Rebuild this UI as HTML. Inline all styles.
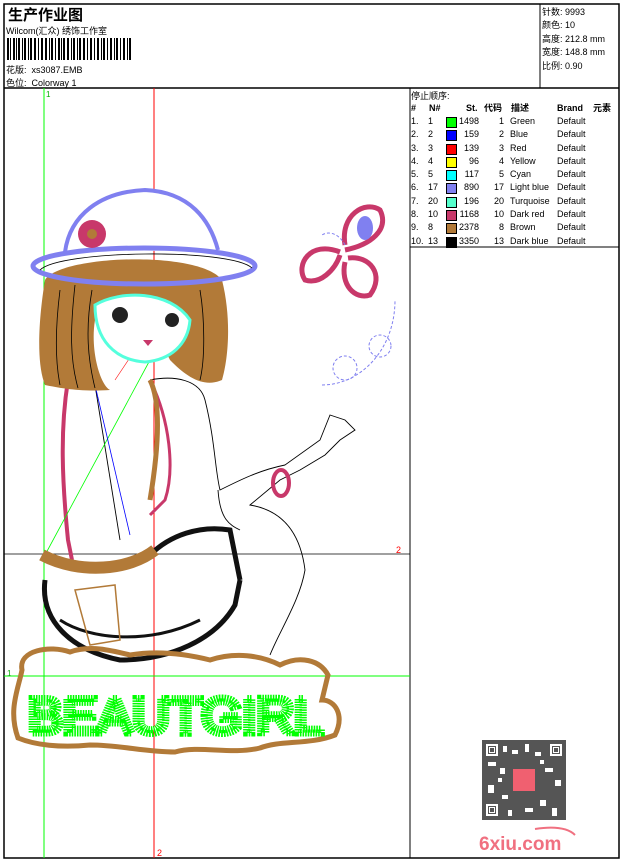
<!DOCTYPE html>
<html><head><meta charset="utf-8"><style>
body{margin:0;background:#fff;width:620px;height:860px;overflow:hidden;font-family:"Liberation Sans","Noto Sans CJK SC",sans-serif;}
.t{position:absolute;font-size:9px;color:#000;white-space:nowrap;}
span{white-space:nowrap;}
</style></head><body>
<svg width="620" height="860" style="position:absolute;left:0;top:0" xmlns="http://www.w3.org/2000/svg">
<rect x="4" y="4" width="615" height="854" fill="none" stroke="#000" stroke-width="1.5"/>
<line x1="4" y1="88" x2="619" y2="88" stroke="#000" stroke-width="1.5"/>
<line x1="540" y1="4" x2="540" y2="88" stroke="#000"/>
<line x1="410" y1="88" x2="410" y2="858" stroke="#000"/>
<line x1="410" y1="247" x2="619" y2="247" stroke="#000"/>
<g fill="#000">
<rect x="7" y="38" width="2" height="22"/><rect x="10" y="38" width="1" height="22"/><rect x="13" y="38" width="2" height="22"/><rect x="16" y="38" width="1" height="22"/><rect x="18" y="38" width="2" height="22"/><rect x="22" y="38" width="1" height="22"/><rect x="24" y="38" width="2" height="22"/><rect x="28" y="38" width="1" height="22"/><rect x="30" y="38" width="2" height="22"/><rect x="34" y="38" width="2" height="22"/><rect x="38" y="38" width="1" height="22"/><rect x="41" y="38" width="2" height="22"/><rect x="45" y="38" width="2" height="22"/><rect x="49" y="38" width="1" height="22"/><rect x="51" y="38" width="2" height="22"/><rect x="55" y="38" width="1" height="22"/><rect x="58" y="38" width="2" height="22"/><rect x="61" y="38" width="1" height="22"/><rect x="63" y="38" width="2" height="22"/><rect x="67" y="38" width="2" height="22"/><rect x="71" y="38" width="1" height="22"/><rect x="73" y="38" width="2" height="22"/><rect x="77" y="38" width="1" height="22"/><rect x="79" y="38" width="2" height="22"/><rect x="83" y="38" width="2" height="22"/><rect x="87" y="38" width="1" height="22"/><rect x="90" y="38" width="2" height="22"/><rect x="94" y="38" width="1" height="22"/><rect x="97" y="38" width="2" height="22"/><rect x="101" y="38" width="1" height="22"/><rect x="103" y="38" width="2" height="22"/><rect x="107" y="38" width="1" height="22"/><rect x="110" y="38" width="2" height="22"/><rect x="114" y="38" width="1" height="22"/><rect x="116" y="38" width="2" height="22"/><rect x="120" y="38" width="1" height="22"/><rect x="123" y="38" width="2" height="22"/><rect x="127" y="38" width="1" height="22"/><rect x="129" y="38" width="2" height="22"/>
</g>
<line x1="44" y1="88" x2="44" y2="858" stroke="#0f0"/>
<line x1="154" y1="88" x2="154" y2="858" stroke="#f00"/>
<line x1="4" y1="676" x2="410" y2="676" stroke="#0f0"/>
<line x1="4" y1="554" x2="410" y2="554" stroke="#000" stroke-width="0.8"/>
<text x="46" y="97" font-size="8" fill="#0a0" font-family="Liberation Sans">1</text>
<text x="7" y="676" font-size="8" fill="#0a0" font-family="Liberation Sans">1</text>
<text x="396" y="553" font-size="9" fill="#f00" font-family="Liberation Sans">2</text>
<text x="157" y="856" font-size="9" fill="#f00" font-family="Liberation Sans">2</text>
<g fill="none" stroke="#000" stroke-width="0.9">
<path d="M150 380 C175 375 200 380 205 400 C215 440 215 470 220 490 C240 480 260 470 285 465 L320 440 L330 415 L345 420 L355 430 L340 440 L325 455 L300 470 L280 480 L250 505 C280 510 300 530 305 570 C300 600 280 630 270 655"/>
<path d="M218 490 C220 520 230 525 240 530"/>
<path d="M95 385 L120 540"/>
</g>
<path d="M68 380 C60 430 62 480 68 540 L72 560" fill="none" stroke="#c8386a" stroke-width="4"/>
<path d="M150 380 C170 420 175 470 165 500 L150 515" fill="none" stroke="#c8386a" stroke-width="3"/>
<path d="M150 380 C160 400 160 440 150 500" fill="none" stroke="#b27a38" stroke-width="5"/>
<ellipse cx="281" cy="483" rx="8" ry="13" fill="none" stroke="#c8386a" stroke-width="4"/>
<line x1="45" y1="555" x2="150" y2="360" stroke="#0f0" stroke-width="0.8"/>
<line x1="95" y1="385" x2="130" y2="535" stroke="#00f" stroke-width="0.8"/>
<line x1="115" y1="380" x2="175" y2="290" stroke="#f00" stroke-width="0.6"/>
<g fill="none" stroke="#111" stroke-width="5">
<path d="M45 580 C40 620 70 650 120 660 C170 660 215 640 235 605 L240 580"/>
<path d="M150 555 C170 535 200 525 230 530 L240 580"/>
<path d="M60 620 C90 640 150 645 200 620" stroke-width="3"/>
</g>
<path d="M42 555 C80 575 130 570 155 550" fill="none" stroke="#b27a38" stroke-width="12"/>
<path d="M75 590 L115 585 L120 640 L90 645 Z" fill="none" stroke="#b27a38" stroke-width="1.5"/>
<path d="M45 280 C60 255 200 250 222 280 C232 320 228 360 222 380 C200 390 180 370 170 360 L155 330 C140 300 110 300 95 320 C90 350 100 385 110 390 C80 392 60 388 45 385 C35 360 40 310 45 280 Z" fill="#b27a38"/>
<g stroke="#000" fill="none" stroke-width="0.8"><path d="M60 290 C55 330 55 360 60 385"/><path d="M75 285 C70 330 70 360 78 388"/><path d="M92 290 C85 330 88 360 95 388"/><path d="M200 290 C205 320 205 360 200 380"/></g>
<path d="M95 305 C120 290 170 290 190 320 C188 345 170 360 145 362 C115 360 95 340 95 305 Z" fill="#fff" stroke="#5fd" stroke-width="3"/>
<circle cx="120" cy="315" r="8" fill="#222"/><circle cx="172" cy="320" r="7" fill="#222"/>
<path d="M143 340 L153 340 L148 346 Z" fill="#c8386a"/>
<path d="M65 252 C70 215 100 192 145 190 C190 192 210 220 218 250" fill="#fff" stroke="#8080f0" stroke-width="4"/>
<ellipse cx="144" cy="266" rx="111" ry="18" fill="none" stroke="#8080f0" stroke-width="5"/>
<path d="M40 270 C60 250 230 248 252 268" fill="none" stroke="#000" stroke-width="0.8"/>
<circle cx="92" cy="234" r="14" fill="#c8386a"/><circle cx="92" cy="234" r="5" fill="#b27a38"/>
<g fill="none" stroke="#c8386a" stroke-width="5">
<path d="M345 245 C340 215 365 200 380 210 C390 230 370 245 345 250"/>
<path d="M340 252 C310 240 295 265 305 280 C320 285 335 270 340 255"/>
<path d="M348 258 C370 255 385 275 370 295 C355 300 340 285 345 262"/>
</g>
<ellipse cx="365" cy="228" rx="8" ry="12" fill="#8080f0"/>
<g fill="none" stroke="#8080f0" stroke-width="1" stroke-dasharray="3 2">
<circle cx="345" cy="368" r="12"/><circle cx="380" cy="346" r="11"/><path d="M322 385 C360 385 395 350 395 300"/><path d="M345 245 C340 235 330 230 322 235"/>
</g>
<path d="M22 670 C18 650 50 645 70 652 C90 645 110 650 130 655 C160 650 190 655 210 660 C235 652 260 655 280 665 C300 655 320 660 328 675 L322 700 C335 700 345 715 335 735 C310 745 280 740 260 748 C230 755 200 745 175 752 C145 752 120 745 90 745 C60 748 35 745 18 738 C8 710 18 690 22 670 Z" fill="none" stroke="#b27a38" stroke-width="5"/>
<text x="28" y="733" font-family="Liberation Sans" font-size="50" fill="none" stroke="#0f0" stroke-width="7" stroke-dasharray="1.5 1" textLength="295" lengthAdjust="spacingAndGlyphs">BEAUTGIRL</text>
<rect x="482" y="740" width="84" height="80" fill="#555"/>
<g fill="#fff">
<rect x="486" y="744" width="12" height="12"/><rect x="550" y="744" width="12" height="12"/><rect x="486" y="804" width="12" height="12"/>
<rect x="503" y="746" width="4" height="6"/><rect x="512" y="750" width="6" height="4"/><rect x="525" y="744" width="4" height="8"/><rect x="535" y="752" width="6" height="4"/><rect x="488" y="762" width="8" height="4"/><rect x="500" y="768" width="5" height="6"/><rect x="545" y="768" width="8" height="4"/><rect x="555" y="780" width="6" height="6"/><rect x="488" y="785" width="6" height="8"/><rect x="502" y="795" width="6" height="4"/><rect x="540" y="800" width="6" height="6"/><rect x="525" y="808" width="8" height="4"/><rect x="552" y="808" width="5" height="8"/><rect x="508" y="810" width="4" height="6"/><rect x="498" y="778" width="4" height="4"/><rect x="540" y="760" width="4" height="4"/>
</g>
<g fill="#555"><rect x="488" y="746" width="8" height="8"/><rect x="552" y="746" width="8" height="8"/><rect x="488" y="806" width="8" height="8"/></g>
<g fill="#fff"><rect x="489" y="747" width="6" height="6"/><rect x="553" y="747" width="6" height="6"/><rect x="489" y="807" width="6" height="6"/></g>
<g fill="#555"><rect x="490" y="748" width="4" height="4"/><rect x="554" y="748" width="4" height="4"/><rect x="490" y="808" width="4" height="4"/></g>
<rect x="513" y="769" width="22" height="22" fill="#f06070"/>
<path d="M535 829 C555 826 568 828 575 835" fill="none" stroke="#f07080" stroke-width="2"/>
<text x="479" y="850" font-family="Liberation Sans" font-weight="bold" font-size="19" fill="#f07080">6xiu.com</text>
</svg>
<div class="t" style="left:8px;top:4px;font-size:15px;font-weight:bold;">生产作业图</div>
<div class="t" style="left:6px;top:24px;">Wilcom(汇众) 绣饰工作室</div>
<div class="t" style="left:6px;top:63px;">花版:&nbsp; xs3087.EMB</div>
<div class="t" style="left:6px;top:76px;">色位:&nbsp; Colorway 1</div>
<div class="t" style="left:542px;top:6px;line-height:13.4px;">针数: 9993<br>颜色: 10<br>高度: 212.8 mm<br>宽度: 148.8 mm<br>比例: 0.90</div>
<div class="t" style="left:411px;top:89px;">停止顺序:</div>
<div style="position:absolute;left:411px;top:102px;width:210px;font-size:9px;line-height:13px;">
<div style="position:relative;height:13px;font-weight:bold;text-decoration:underline;"><span style="position:absolute;left:0">#</span><span style="position:absolute;left:18px">N#</span><span style="position:absolute;left:55px">St.</span><span style="position:absolute;left:73px">代码</span><span style="position:absolute;left:100px">描述</span><span style="position:absolute;left:146px">Brand</span><span style="position:absolute;left:182px">元素</span></div>
</div>
<div style="position:absolute;left:411px;top:115px;width:210px;font-size:9px;line-height:13.3px;white-space:nowrap">
<div style="position:relative;height:13.3px"><span style="position:absolute;left:0">1.</span><span style="position:absolute;left:17px">1</span><span style="position:absolute;left:35px;top:2px;width:9px;height:9px;background:#0f0;border:1px solid #000"></span><span style="position:absolute;left:46px;width:22px;text-align:right">1498</span><span style="position:absolute;left:80px;width:13px;text-align:right">1</span><span style="position:absolute;left:99px">Green</span><span style="position:absolute;left:146px">Default</span></div>
<div style="position:relative;height:13.3px"><span style="position:absolute;left:0">2.</span><span style="position:absolute;left:17px">2</span><span style="position:absolute;left:35px;top:2px;width:9px;height:9px;background:#00f;border:1px solid #000"></span><span style="position:absolute;left:46px;width:22px;text-align:right">159</span><span style="position:absolute;left:80px;width:13px;text-align:right">2</span><span style="position:absolute;left:99px">Blue</span><span style="position:absolute;left:146px">Default</span></div>
<div style="position:relative;height:13.3px"><span style="position:absolute;left:0">3.</span><span style="position:absolute;left:17px">3</span><span style="position:absolute;left:35px;top:2px;width:9px;height:9px;background:#f00;border:1px solid #000"></span><span style="position:absolute;left:46px;width:22px;text-align:right">139</span><span style="position:absolute;left:80px;width:13px;text-align:right">3</span><span style="position:absolute;left:99px">Red</span><span style="position:absolute;left:146px">Default</span></div>
<div style="position:relative;height:13.3px"><span style="position:absolute;left:0">4.</span><span style="position:absolute;left:17px">4</span><span style="position:absolute;left:35px;top:2px;width:9px;height:9px;background:#ff0;border:1px solid #000"></span><span style="position:absolute;left:46px;width:22px;text-align:right">96</span><span style="position:absolute;left:80px;width:13px;text-align:right">4</span><span style="position:absolute;left:99px">Yellow</span><span style="position:absolute;left:146px">Default</span></div>
<div style="position:relative;height:13.3px"><span style="position:absolute;left:0">5.</span><span style="position:absolute;left:17px">5</span><span style="position:absolute;left:35px;top:2px;width:9px;height:9px;background:#0ff;border:1px solid #000"></span><span style="position:absolute;left:46px;width:22px;text-align:right">117</span><span style="position:absolute;left:80px;width:13px;text-align:right">5</span><span style="position:absolute;left:99px">Cyan</span><span style="position:absolute;left:146px">Default</span></div>
<div style="position:relative;height:13.3px"><span style="position:absolute;left:0">6.</span><span style="position:absolute;left:17px">17</span><span style="position:absolute;left:35px;top:2px;width:9px;height:9px;background:#8080f0;border:1px solid #000"></span><span style="position:absolute;left:46px;width:22px;text-align:right">890</span><span style="position:absolute;left:80px;width:13px;text-align:right">17</span><span style="position:absolute;left:99px">Light blue</span><span style="position:absolute;left:146px">Default</span></div>
<div style="position:relative;height:13.3px"><span style="position:absolute;left:0">7.</span><span style="position:absolute;left:17px">20</span><span style="position:absolute;left:35px;top:2px;width:9px;height:9px;background:#5fc;border:1px solid #000"></span><span style="position:absolute;left:46px;width:22px;text-align:right">196</span><span style="position:absolute;left:80px;width:13px;text-align:right">20</span><span style="position:absolute;left:99px">Turquoise</span><span style="position:absolute;left:146px">Default</span></div>
<div style="position:relative;height:13.3px"><span style="position:absolute;left:0">8.</span><span style="position:absolute;left:17px">10</span><span style="position:absolute;left:35px;top:2px;width:9px;height:9px;background:#c8386a;border:1px solid #000"></span><span style="position:absolute;left:46px;width:22px;text-align:right">1168</span><span style="position:absolute;left:80px;width:13px;text-align:right">10</span><span style="position:absolute;left:99px">Dark red</span><span style="position:absolute;left:146px">Default</span></div>
<div style="position:relative;height:13.3px"><span style="position:absolute;left:0">9.</span><span style="position:absolute;left:17px">8</span><span style="position:absolute;left:35px;top:2px;width:9px;height:9px;background:#b27a38;border:1px solid #000"></span><span style="position:absolute;left:46px;width:22px;text-align:right">2378</span><span style="position:absolute;left:80px;width:13px;text-align:right">8</span><span style="position:absolute;left:99px">Brown</span><span style="position:absolute;left:146px">Default</span></div>
<div style="position:relative;height:13.3px"><span style="position:absolute;left:0">10.</span><span style="position:absolute;left:17px">13</span><span style="position:absolute;left:35px;top:2px;width:9px;height:9px;background:#000;border:1px solid #000"></span><span style="position:absolute;left:46px;width:22px;text-align:right">3350</span><span style="position:absolute;left:80px;width:13px;text-align:right">13</span><span style="position:absolute;left:99px">Dark blue</span><span style="position:absolute;left:146px">Default</span></div>
</div>
</body></html>
